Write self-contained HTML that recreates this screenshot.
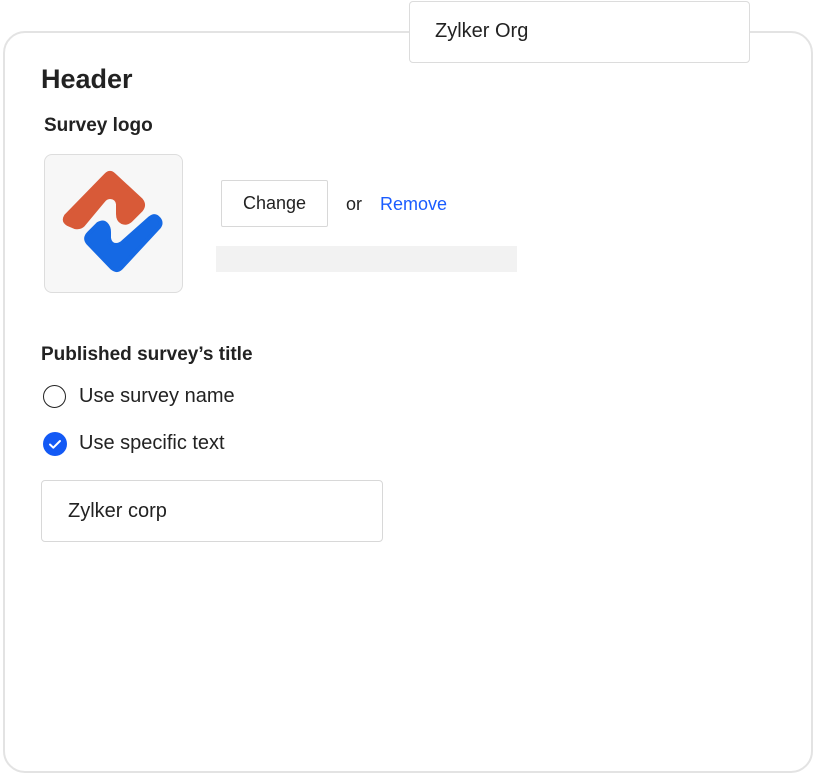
<!DOCTYPE html>
<html><head><style>
body{margin:0;width:816px;height:776px;background:#fff;font-family:"Liberation Sans",sans-serif;color:#222;position:relative;overflow:hidden}
.card{position:absolute;left:3px;top:31px;width:806px;height:738px;border:2px solid #e3e3e3;border-radius:22px}
.org{position:absolute;left:409px;top:1px;border:1px solid #dcdcdc;border-radius:4px;background:#fff;font-size:20px;line-height:58px;padding-left:25px;box-sizing:border-box;width:341px;height:62px}
.abs{position:absolute;white-space:nowrap}
</style></head><body>
<div class="card"></div>
<div class="org">Zylker Org</div>
<div class="abs" style="left:41px;top:64px;font-size:27px;font-weight:bold;color:#222">Header</div>
<div class="abs" style="left:44px;top:115px;font-size:19px;font-weight:bold;color:#222">Survey logo</div>
<div class="abs" style="left:44px;top:154px;width:137px;height:137px;border:1px solid #ddd;border-radius:8px;background:#f7f7f7"></div>
<svg class="abs" style="left:0;top:0" width="200" height="300">
<path d="M106 175 Q110 171 114 175 L141 200 Q145 205 141 210 L131 220 Q127 224 122 222 Q118 220 118 214 L118 204 Q117 197 110 197 Q106 197 103 201 L83 225 Q80 228 75 227 L68 224 Q63 221 66 216 Z" fill="#d85a38" stroke="#d85a38" stroke-width="4" stroke-linejoin="round"/>
<path d="M150 218 Q155 214 159 219 Q162 223 159 227 L121 268 Q117 272 112 268 L88 243 Q84 238 89 233 L98 224 Q103 221 106 224 Q109 227 109 232 L109 238 Q110 245 116 245 Q120 245 123 242 Z" fill="#1569e4" stroke="#1569e4" stroke-width="4" stroke-linejoin="round"/>
</svg>
<div class="abs" style="left:221px;top:180px;width:107px;height:47px;border:1px solid #d8d8d8;border-radius:2px;box-sizing:border-box;font-size:18px;line-height:45px;text-align:center">Change</div>
<div class="abs" style="left:346px;top:194px;font-size:18px">or</div>
<div class="abs" style="left:380px;top:194px;font-size:18px;color:#1a5cff">Remove</div>
<div class="abs" style="left:216px;top:246px;width:301px;height:26px;background:#f2f2f2"></div>
<div class="abs" style="left:41px;top:344px;font-size:19px;font-weight:bold">Published survey’s title</div>
<div class="abs" style="left:43px;top:385px;border:1.5px solid #222;border-radius:50%;box-sizing:border-box;width:23px;height:23px"></div>
<div class="abs" style="left:79px;top:385px;font-size:20px">Use survey name</div>
<svg class="abs" style="left:43px;top:432px" width="24" height="24"><circle cx="12" cy="12" r="12" fill="#1359f5"/><path d="M7 12.5l3.3 3.2L17 9" fill="none" stroke="#fff" stroke-width="2" stroke-linecap="round" stroke-linejoin="round"/></svg>
<div class="abs" style="left:79px;top:432px;font-size:20px">Use specific text</div>
<div class="abs" style="left:41px;top:480px;width:342px;height:62px;border:1px solid #d8d8d8;border-radius:4px;box-sizing:border-box;font-size:20px;line-height:60px;padding-left:26px">Zylker corp</div>
</body></html>
